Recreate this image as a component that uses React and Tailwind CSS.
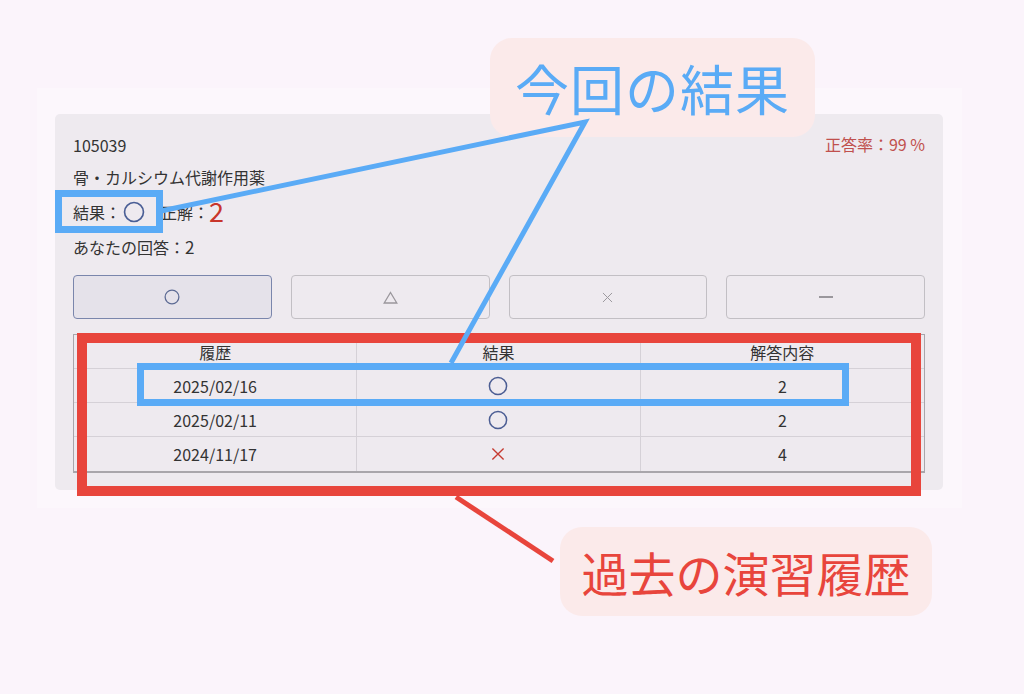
import React from "react";

const rows = [
  { date: "2025/02/16", result: "o", answer: "2" },
  { date: "2025/02/11", result: "o", answer: "2" },
  { date: "2024/11/17", result: "x", answer: "4" },
];

function Circle({ size = 18, color = "#4b5d93", width = 1.6 }) {
  return (
    <svg width={size} height={size} viewBox="0 0 20 20">
      <circle cx="10" cy="10" r="8.6" fill="none" stroke={color} strokeWidth={width} />
    </svg>
  );
}

function Cross({ size = 16, color = "#c63a30", width = 1.6 }) {
  return (
    <svg width={size} height={size} viewBox="0 0 20 20">
      <path d="M3 3 L17 17 M17 3 L3 17" stroke={color} strokeWidth={width} fill="none" />
    </svg>
  );
}

function Triangle() {
  return (
    <svg width="15" height="13" viewBox="0 0 15 13">
      <path d="M7.5 1.5 L13.8 12 L1.2 12 Z" fill="none" stroke="#9a979c" strokeWidth="1.3" />
    </svg>
  );
}

function Dash() {
  return <div className="w-[14px] h-[1.5px] bg-[#9a979c]" />;
}

function App() {
  return (
    <div
      className="relative w-[1024px] h-[694px] overflow-hidden bg-[#fbf4fb] pt-[88px] pl-[37px]"
      style={{ fontFamily: '"Noto Sans CJK JP", "Noto Sans", sans-serif' }}
    >
      {/* screenshot area */}
      <div className="w-[925px] h-[420px] bg-[#fcf7fc] pt-[26px] pl-[18px]">
        <div className="w-[888px] h-[376px] bg-[#eeeaef] rounded-[5px] px-[18px] pt-[21px] text-[#333] text-[16px]">
          <div className="flex justify-between items-center h-[20px]">
            <span className="leading-[20px]">105039</span>
            <span className="text-[#c0504d] text-[16px] leading-[20px] -mt-[2px]">正答率：99 %</span>
          </div>
          <div className="mt-[12px] h-[20px] leading-[20px]">骨・カルシウム代謝作用薬</div>
          <div className="mt-[10px] h-[30px] flex items-center">
            <span className="leading-[20px]">結果：</span>
            <span className="ml-[2px]">
              <Circle size={22} width={1.5} color="#4a5e95" />
            </span>
            <span className="ml-[16px] leading-[20px]">正解：</span>
            <span className="text-[#c8352b] text-[27px] leading-[30px] -mt-[2px]">2</span>
          </div>
          <div className="mt-[10px] h-[20px] leading-[20px]">
            あなたの回答：<span className="text-[17px]">2</span>
          </div>

          {/* choice buttons */}
          <div className="mt-[18px] flex gap-[19px]">
            <div className="w-[199px] h-[44px] rounded-[4px] border border-[#7a86ac] bg-[#e5e2ea] flex items-center justify-center">
              <Circle size={16} width={1.6} color="#5d6b94" />
            </div>
            <div className="w-[199px] h-[44px] rounded-[4px] border border-[#c2bfc4] flex items-center justify-center">
              <Triangle />
            </div>
            <div className="w-[199px] h-[44px] rounded-[4px] border border-[#c2bfc4] flex items-center justify-center">
              <Cross size={13} width={1.5} color="#9a979c" />
            </div>
            <div className="w-[199px] h-[44px] rounded-[4px] border border-[#c2bfc4] flex items-center justify-center">
              <Dash />
            </div>
          </div>

          {/* history table */}
          <div className="mt-[15px] w-[852px] border-l border-r border-t border-[#a9a6ab] border-b-2 border-b-[#a9a6ab]">
            <div className="grid grid-cols-3 h-[34px] border-b border-[#d5d1d7]">
              <div className="flex items-center justify-center border-r border-[#d5d1d7]">履歴</div>
              <div className="flex items-center justify-center border-r border-[#d5d1d7]">結果</div>
              <div className="flex items-center justify-center">解答内容</div>
            </div>
            {rows.map((r, i) => (
              <div
                key={r.date}
                className={
                  "grid grid-cols-3 h-[34px] " +
                  (i < rows.length - 1 ? "border-b border-[#d5d1d7]" : "")
                }
              >
                <div className="flex items-center justify-center border-r border-[#d5d1d7] text-[16px]">
                  {r.date}
                </div>
                <div className="flex items-center justify-center border-r border-[#d5d1d7]">
                  {r.result === "o" ? (
                    <Circle size={20} width={1.5} color="#4b5d93" />
                  ) : (
                    <Cross size={16} width={1.7} color="#c63a30" />
                  )}
                </div>
                <div className="flex items-center justify-center text-[16px]">{r.answer}</div>
              </div>
            ))}
          </div>
        </div>
      </div>

      {/* callouts */}
      <div className="absolute left-[490px] top-[38px] w-[325px] h-[99px] rounded-[22px] bg-[#fbeaea] flex items-center justify-center">
        <span className="text-[#5aabf6] text-[54px] leading-none tracking-[1px]">今回の結果</span>
      </div>
      <div className="absolute left-[560px] top-[527px] w-[372px] h-[89px] rounded-[22px] bg-[#fbeaea] flex items-center justify-center">
        <span className="text-[#e8453c] text-[47px] leading-none">過去の演習履歴</span>
      </div>

      {/* annotation boxes */}
      <div className="absolute left-[55px] top-[190px] w-[108px] h-[43px] border-[7px] border-[#5aabf6]" />
      <div className="absolute left-[137px] top-[363px] w-[712px] h-[43px] border-[7px] border-[#5aabf6]" />
      <div className="absolute left-[77px] top-[333px] w-[844px] h-[163px] border-[10px] border-[#e8453c]" />

      {/* annotation lines */}
      <svg className="absolute left-0 top-0" width="1024" height="694" viewBox="0 0 1024 694">
        <path d="M161 211 L585 122 L451 363" fill="none" stroke="#5aabf6" strokeWidth="5" strokeLinejoin="miter" />
        <path d="M456 497 L553 561" fill="none" stroke="#e8453c" strokeWidth="5" />
      </svg>
    </div>
  );
}

export default App;
